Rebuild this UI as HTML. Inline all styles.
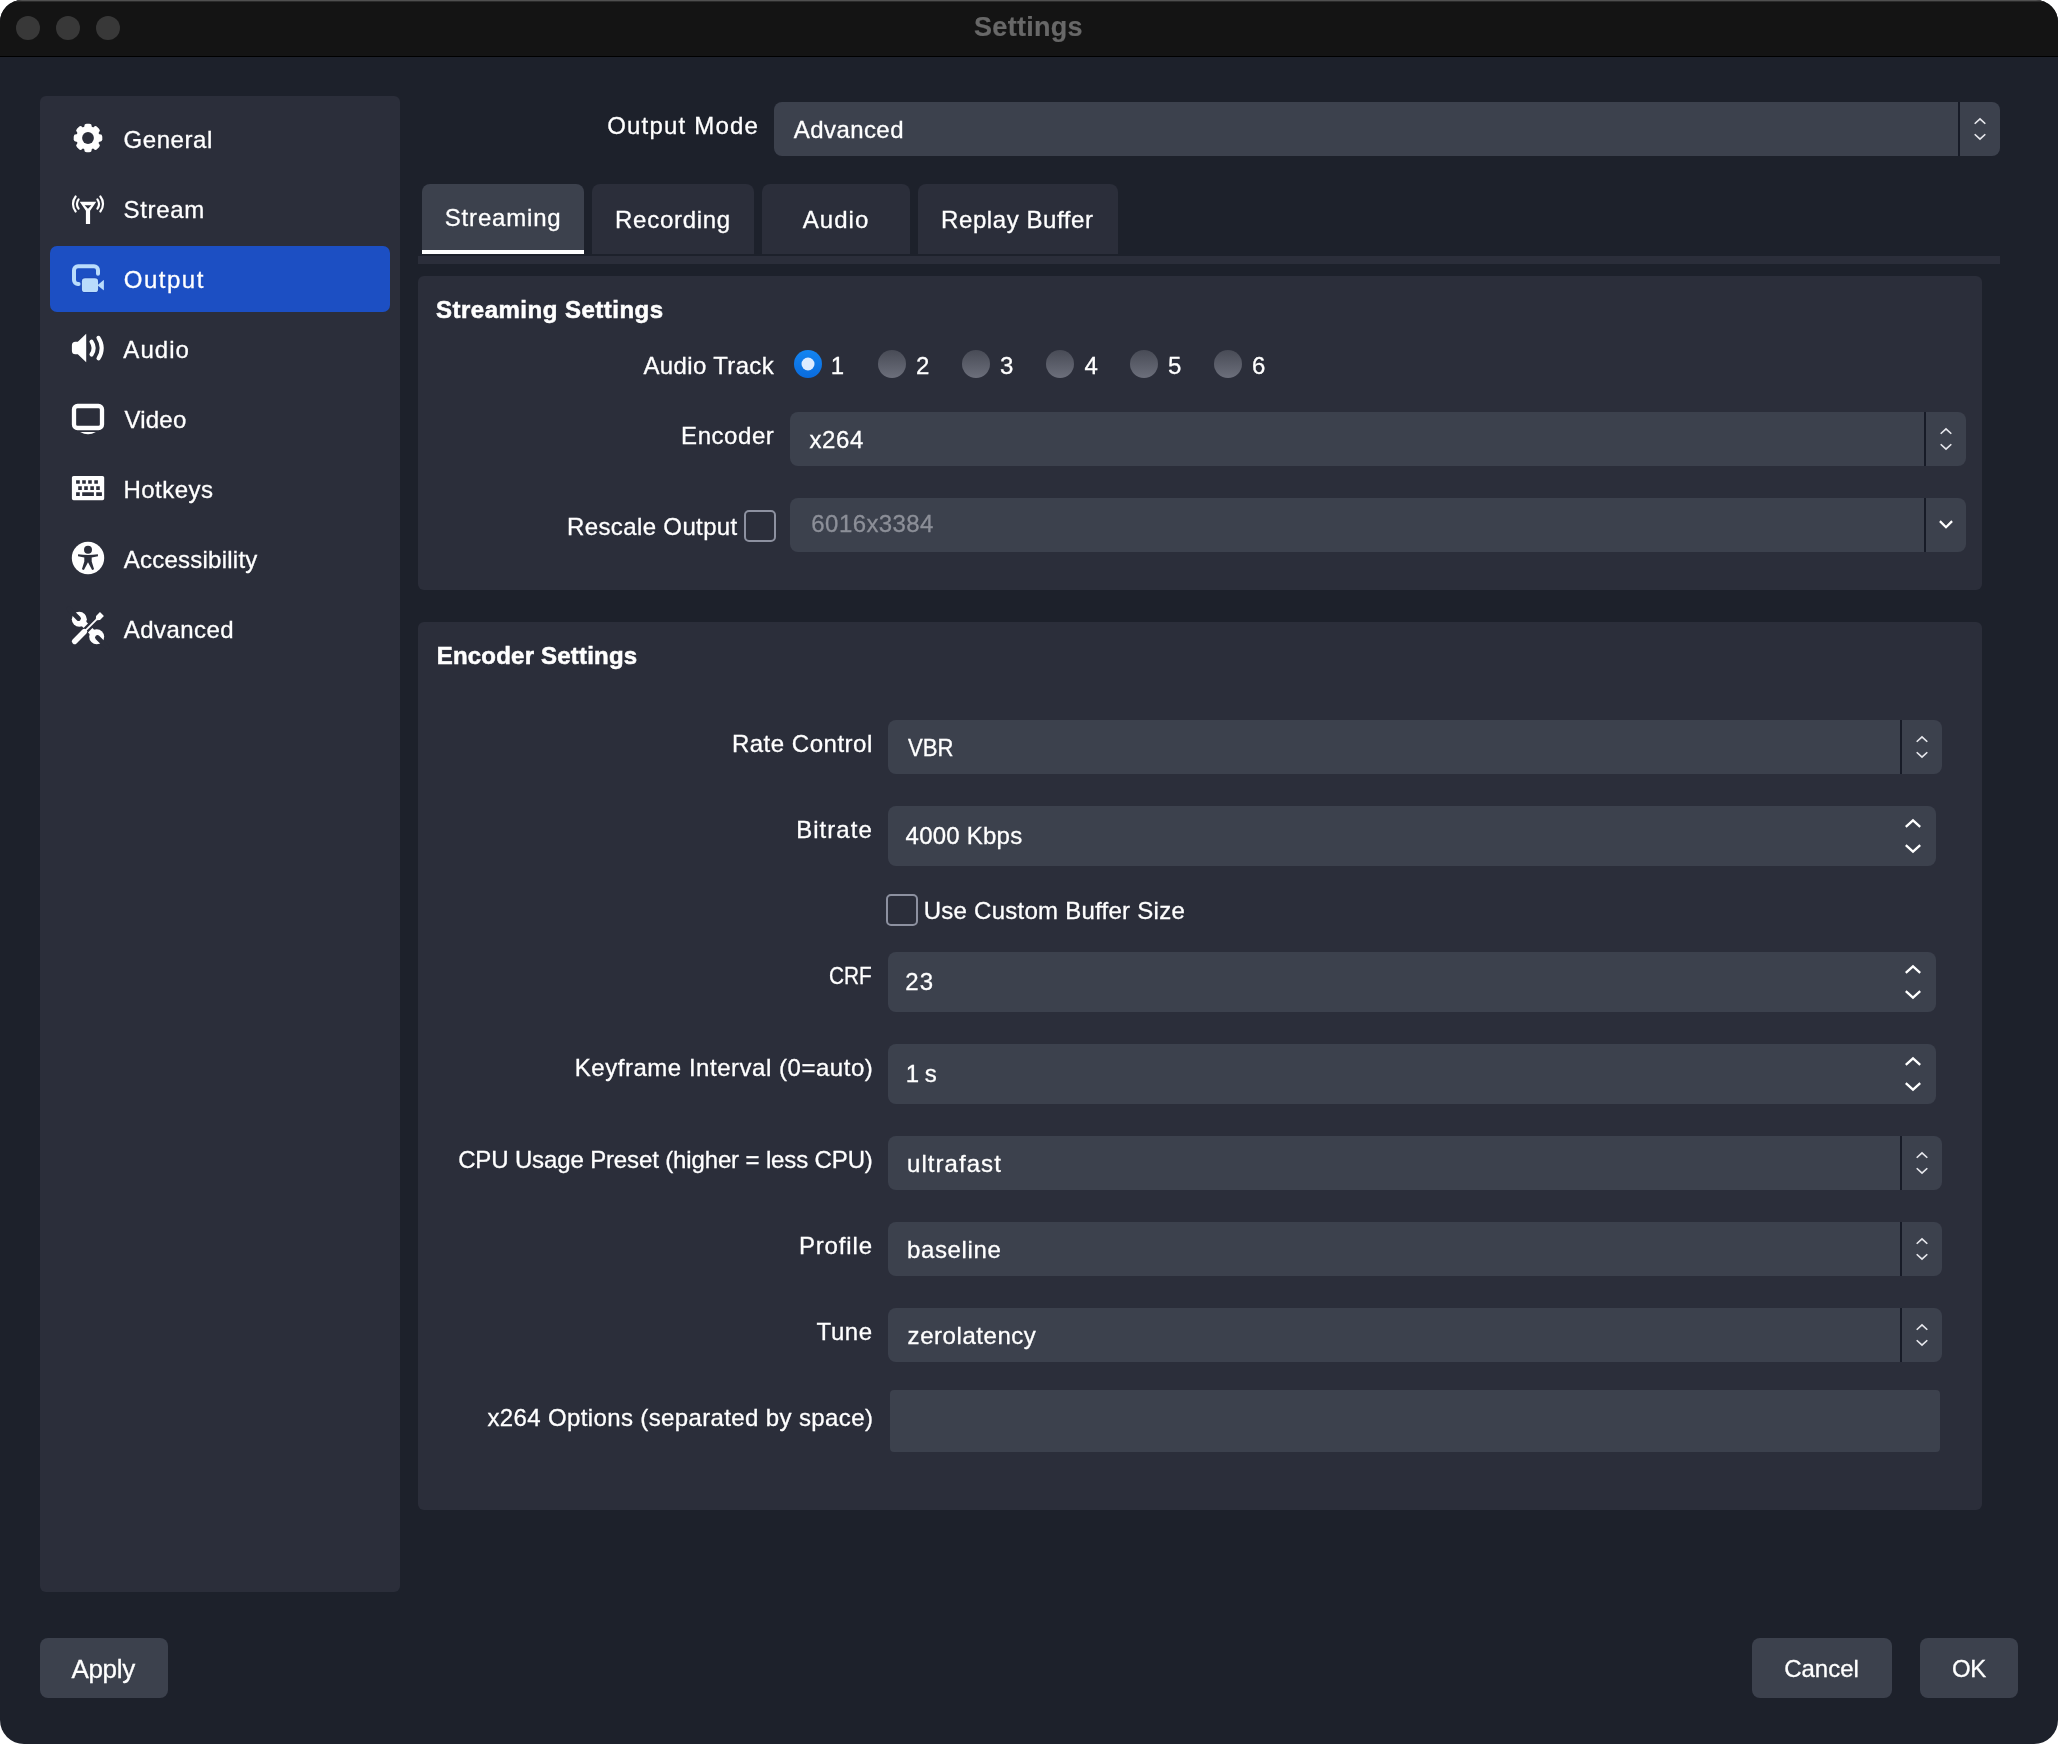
<!DOCTYPE html>
<html><head><meta charset="utf-8"><title>Settings</title>
<style>
html,body{margin:0;padding:0;background:#fff;}
body{width:2058px;height:1744px;overflow:hidden;position:relative;font-family:"Liberation Sans",sans-serif;}
#win{position:absolute;left:0;top:0;width:2058px;height:1744px;background:#1d212b;border-radius:22px 22px 24px 24px;overflow:hidden;}
#win>div{position:absolute;}
#tb{left:0;top:0;width:2058px;height:56px;background:#141414;border-bottom:1px solid #000;box-shadow:inset 0 1px 0 #505050, inset 0 2px 0 #2a2a2a;}
.t{position:absolute;white-space:nowrap;height:40px;line-height:40px;-webkit-text-stroke:0.3px currentColor;}
#txt{position:absolute;left:0;top:0;width:2058px;height:1744px;will-change:transform;}
svg{position:absolute;left:0;top:0;}
</style></head><body><div id="win">
<div id="tb"></div>

<div style="left:40px;top:96px;width:360px;height:1496px;background:#2b2e3a;border-radius:6px;"></div>
<div style="left:50px;top:246px;width:340px;height:66px;background:#1c4fc3;border-radius:7px;"></div>
<div style="left:774px;top:102px;width:1226px;height:54px;background:#3c414d;border-radius:8px;"></div>
<div style="left:1958px;top:102px;width:2px;height:54px;background:#171b27;border-radius:0px;"></div>
<div style="left:422px;top:184px;width:162px;height:70px;background:#3c414d;border-radius:8px 8px 0 0;"></div>
<div style="left:422px;top:250px;width:162px;height:4px;background:#ffffff;border-radius:0px;"></div>
<div style="left:592px;top:184px;width:162px;height:70px;background:#2b2e3a;border-radius:8px 8px 0 0;"></div>
<div style="left:762px;top:184px;width:148px;height:70px;background:#2b2e3a;border-radius:8px 8px 0 0;"></div>
<div style="left:918px;top:184px;width:200px;height:70px;background:#2b2e3a;border-radius:8px 8px 0 0;"></div>
<div style="left:418px;top:256px;width:1582px;height:8px;background:#2b2e3a;border-radius:0px;"></div>
<div style="left:418px;top:276px;width:1564px;height:314px;background:#2b2e3a;border-radius:6px;"></div>
<div style="left:418px;top:622px;width:1564px;height:888px;background:#2b2e3a;border-radius:6px;"></div>
<div style="left:790px;top:412px;width:1176px;height:54px;background:#3c414d;border-radius:8px;"></div>
<div style="left:1924px;top:412px;width:2px;height:54px;background:#171b27;border-radius:0px;"></div>
<div style="left:790px;top:498px;width:1176px;height:54px;background:#3c414d;border-radius:8px;"></div>
<div style="left:1924px;top:498px;width:2px;height:54px;background:#171b27;border-radius:0px;"></div>
<div style="left:888px;top:720px;width:1054px;height:54px;background:#3c414d;border-radius:8px;"></div>
<div style="left:1900px;top:720px;width:2px;height:54px;background:#171b27;border-radius:0px;"></div>
<div style="left:888px;top:806px;width:1048px;height:60px;background:#3c414d;border-radius:8px;"></div>
<div style="left:888px;top:952px;width:1048px;height:60px;background:#3c414d;border-radius:8px;"></div>
<div style="left:888px;top:1044px;width:1048px;height:60px;background:#3c414d;border-radius:8px;"></div>
<div style="left:888px;top:1136px;width:1054px;height:54px;background:#3c414d;border-radius:8px;"></div>
<div style="left:1900px;top:1136px;width:2px;height:54px;background:#171b27;border-radius:0px;"></div>
<div style="left:888px;top:1222px;width:1054px;height:54px;background:#3c414d;border-radius:8px;"></div>
<div style="left:1900px;top:1222px;width:2px;height:54px;background:#171b27;border-radius:0px;"></div>
<div style="left:888px;top:1308px;width:1054px;height:54px;background:#3c414d;border-radius:8px;"></div>
<div style="left:1900px;top:1308px;width:2px;height:54px;background:#171b27;border-radius:0px;"></div>
<div style="left:890px;top:1390px;width:1050px;height:62px;background:#3c414d;border-radius:4px;"></div>
<div style="left:40px;top:1638px;width:128px;height:60px;background:#3c414d;border-radius:8px;"></div>
<div style="left:1752px;top:1638px;width:140px;height:60px;background:#3c414d;border-radius:8px;"></div>
<div style="left:1920px;top:1638px;width:98px;height:60px;background:#3c414d;border-radius:8px;"></div>
<div style="left:744px;top:510px;width:32px;height:32px;box-sizing:border-box;border:2px solid #8d91a0;border-radius:5px;background:#2b2e3a"></div>
<div style="left:886px;top:894px;width:32px;height:32px;box-sizing:border-box;border:2px solid #8d91a0;border-radius:5px;background:#2b2e3a"></div>
<svg width="2058" height="1744" viewBox="0 0 2058 1744"><defs><linearGradient id="rb" x1="0" y1="0" x2="0" y2="1"><stop offset="0" stop-color="#1385f2"/><stop offset="1" stop-color="#0a6bdc"/></linearGradient><linearGradient id="rg" x1="0" y1="0" x2="0" y2="1"><stop offset="0" stop-color="#484b56"/><stop offset="1" stop-color="#6c6f7b"/></linearGradient></defs>
<circle cx="28" cy="28" r="12" fill="#383838"/><circle cx="68" cy="28" r="12" fill="#383838"/><circle cx="108" cy="28" r="12" fill="#383838"/>
<path d="M1974.7 123.75L1980 118.85L1985.3 123.75" fill="none" stroke="#e6e7ec" stroke-width="1.7" stroke-linecap="butt" stroke-linejoin="miter"/>
<path d="M1974.7 134.25L1980 139.15L1985.3 134.25" fill="none" stroke="#e6e7ec" stroke-width="1.7" stroke-linecap="butt" stroke-linejoin="miter"/>
<path d="M1940.7 433.75L1946 428.85L1951.3 433.75" fill="none" stroke="#e6e7ec" stroke-width="1.7" stroke-linecap="butt" stroke-linejoin="miter"/>
<path d="M1940.7 444.25L1946 449.15L1951.3 444.25" fill="none" stroke="#e6e7ec" stroke-width="1.7" stroke-linecap="butt" stroke-linejoin="miter"/>
<path d="M1916.7 741.75L1922 736.85L1927.3 741.75" fill="none" stroke="#e6e7ec" stroke-width="1.7" stroke-linecap="butt" stroke-linejoin="miter"/>
<path d="M1916.7 752.25L1922 757.15L1927.3 752.25" fill="none" stroke="#e6e7ec" stroke-width="1.7" stroke-linecap="butt" stroke-linejoin="miter"/>
<path d="M1916.7 1157.75L1922 1152.85L1927.3 1157.75" fill="none" stroke="#e6e7ec" stroke-width="1.7" stroke-linecap="butt" stroke-linejoin="miter"/>
<path d="M1916.7 1168.25L1922 1173.15L1927.3 1168.25" fill="none" stroke="#e6e7ec" stroke-width="1.7" stroke-linecap="butt" stroke-linejoin="miter"/>
<path d="M1916.7 1243.75L1922 1238.85L1927.3 1243.75" fill="none" stroke="#e6e7ec" stroke-width="1.7" stroke-linecap="butt" stroke-linejoin="miter"/>
<path d="M1916.7 1254.25L1922 1259.15L1927.3 1254.25" fill="none" stroke="#e6e7ec" stroke-width="1.7" stroke-linecap="butt" stroke-linejoin="miter"/>
<path d="M1916.7 1329.75L1922 1324.85L1927.3 1329.75" fill="none" stroke="#e6e7ec" stroke-width="1.7" stroke-linecap="butt" stroke-linejoin="miter"/>
<path d="M1916.7 1340.25L1922 1345.15L1927.3 1340.25" fill="none" stroke="#e6e7ec" stroke-width="1.7" stroke-linecap="butt" stroke-linejoin="miter"/>
<path d="M1939.9 521.15L1946 527.25L1952.1 521.15" fill="none" stroke="#ffffff" stroke-width="2.2" stroke-linecap="butt" stroke-linejoin="miter"/>
<path d="M1905.8 826.9L1913 820.3L1920.2 826.9" fill="none" stroke="#ffffff" stroke-width="2.3" stroke-linecap="butt" stroke-linejoin="miter"/>
<path d="M1905.8 845.1L1913 851.7L1920.2 845.1" fill="none" stroke="#ffffff" stroke-width="2.3" stroke-linecap="butt" stroke-linejoin="miter"/>
<path d="M1905.8 972.9L1913 966.3L1920.2 972.9" fill="none" stroke="#ffffff" stroke-width="2.3" stroke-linecap="butt" stroke-linejoin="miter"/>
<path d="M1905.8 991.1L1913 997.7L1920.2 991.1" fill="none" stroke="#ffffff" stroke-width="2.3" stroke-linecap="butt" stroke-linejoin="miter"/>
<path d="M1905.8 1064.9L1913 1058.3L1920.2 1064.9" fill="none" stroke="#ffffff" stroke-width="2.3" stroke-linecap="butt" stroke-linejoin="miter"/>
<path d="M1905.8 1083.1L1913 1089.7L1920.2 1083.1" fill="none" stroke="#ffffff" stroke-width="2.3" stroke-linecap="butt" stroke-linejoin="miter"/>
<circle cx="808" cy="364" r="14" fill="url(#rb)"/><circle cx="808" cy="364" r="6.5" fill="#dcebff"/>
<circle cx="892" cy="364" r="14" fill="url(#rg)"/>
<circle cx="976" cy="364" r="14" fill="url(#rg)"/>
<circle cx="1060" cy="364" r="14" fill="url(#rg)"/>
<circle cx="1144" cy="364" r="14" fill="url(#rg)"/>
<circle cx="1228" cy="364" r="14" fill="url(#rg)"/>
<g transform="translate(88,138)" fill="#fefefe">
<circle r="11.7"/>
<rect x="-3.7" y="-14.3" width="7.4" height="8" rx="2.4" transform="rotate(0)"/>
<rect x="-3.7" y="-14.3" width="7.4" height="8" rx="2.4" transform="rotate(45)"/>
<rect x="-3.7" y="-14.3" width="7.4" height="8" rx="2.4" transform="rotate(90)"/>
<rect x="-3.7" y="-14.3" width="7.4" height="8" rx="2.4" transform="rotate(135)"/>
<rect x="-3.7" y="-14.3" width="7.4" height="8" rx="2.4" transform="rotate(180)"/>
<rect x="-3.7" y="-14.3" width="7.4" height="8" rx="2.4" transform="rotate(225)"/>
<rect x="-3.7" y="-14.3" width="7.4" height="8" rx="2.4" transform="rotate(270)"/>
<rect x="-3.7" y="-14.3" width="7.4" height="8" rx="2.4" transform="rotate(315)"/>
<circle r="5.9" fill="#2b2e3a"/></g>
<path fill-rule="evenodd" fill="#fefefe" d="M79.7 201.8L96.3 201.8L90.1 210.8L90.1 224.1L85.9 224.1L85.9 210.8ZM84.6 205.2L91.4 205.2L88 208.8Z"/>
<path d="M78.59 208.58A7.8 7.8 0 0 1 78.59 199.42" fill="none" stroke="#fefefe" stroke-width="2.2" stroke-linecap="round"/>
<path d="M97.41 199.42A7.8 7.8 0 0 1 97.41 208.58" fill="none" stroke="#fefefe" stroke-width="2.2" stroke-linecap="round"/>
<path d="M75.65 211.49A11.9 11.9 0 0 1 75.65 196.51" fill="none" stroke="#fefefe" stroke-width="2.2" stroke-linecap="round"/>
<path d="M100.35 196.51A11.9 11.9 0 0 1 100.35 211.49" fill="none" stroke="#fefefe" stroke-width="2.2" stroke-linecap="round"/>
<path d="M98 273.7L98 270.2A4 4 0 0 0 94 266.2L78 266.2A4 4 0 0 0 74 270.2L74 280A4 4 0 0 0 78 284L78.6 284" fill="none" stroke="#b9dcfb" stroke-width="4" stroke-linecap="round"/>
<rect x="81.9" y="278.2" width="16.2" height="13.9" rx="3.2" fill="#b9dcfb" stroke="#1a45b0" stroke-width="1.2" paint-order="stroke"/>
<path d="M98 284.7L103.3 280.2Q103.9 279.8 103.9 280.6L103.9 289.7Q103.9 290.5 103.3 290.1L98 285.7Z" fill="#b9dcfb"/>
<path d="M86.2 333.8L86.2 362.3L77.8 354.2L75.4 354.2Q71.9 354.2 71.9 350.7L71.9 345.3Q71.9 341.8 75.4 341.8L77.8 341.8Z" fill="#fefefe"/>
<path d="M91.5 341.6A11.6 11.6 0 0 1 91.5 354.5" fill="none" stroke="#fefefe" stroke-width="4.1" stroke-linecap="round"/>
<path d="M98.5 337.8A18.2 18.2 0 0 1 98.5 358.4" fill="none" stroke="#fefefe" stroke-width="4.1" stroke-linecap="round"/>
<rect x="74" y="406" width="28" height="22" rx="3.5" fill="none" stroke="#fefefe" stroke-width="4.3"/>
<path d="M80.1 431.9L95.9 431.9Q88 436.6 80.1 431.9Z" fill="#fefefe"/>
<path fill-rule="evenodd" fill="#fefefe" d="M73.6 475.9H102.5Q104.2 475.9 104.2 477.6V498.5Q104.2 500.2 102.5 500.2H73.6Q71.9 500.2 71.9 498.5V477.6Q71.9 475.9 73.6 475.9ZM76.1 480.3H79.8V483.8H76.1ZM82.2 480.3H85.8V483.8H82.2ZM88.2 480.3H91.8V483.8H88.2ZM94.3 480.3H97.9V483.8H94.3ZM78.2 486.3H81.8V489.9H78.2ZM84.2 486.3H87.8V489.9H84.2ZM90.3 486.3H93.9V489.9H90.3ZM96.2 486.3H99.8V489.9H96.2ZM76.1 492.2H79.8V495.9H76.1ZM82.2 492.2H93.9V495.9H82.2ZM96.2 492.2H101.9V495.9H96.2Z"/>
<circle cx="88" cy="558" r="16.2" fill="#fefefe"/>
<circle cx="88" cy="549.8" r="4" fill="#2b2e3a"/>
<path d="M78.1 554.2Q88 555.6 97.9 554.2L98 556.3L91.7 557.5L91.7 561.4L94.1 569.3L92.1 570.1L88 562.3L83.9 570.1L81.9 569.3L84.3 561.4L84.3 557.5L78 556.3Z" fill="#2b2e3a"/>
<g transform="translate(88,628) rotate(225)"><rect x="3.1" y="-3.1" width="7" height="6.2" fill="#fefefe"/><circle cx="12.3" cy="0" r="7.5" fill="#fefefe"/><path d="M13.4 0L27 0" stroke="#2b2e3a" stroke-width="4.8" stroke-linecap="round" fill="none"/></g>
<g transform="translate(88,628) rotate(45)"><rect x="3.1" y="-3.1" width="7" height="6.2" fill="#fefefe"/><circle cx="12.3" cy="0" r="7.5" fill="#fefefe"/><path d="M13.4 0L27 0" stroke="#2b2e3a" stroke-width="4.8" stroke-linecap="round" fill="none"/></g>
<g transform="translate(88,628) rotate(-45)" fill="#fefefe"><rect x="-21.6" y="-2.8" width="19.2" height="5.6" rx="2.6"/><rect x="-4" y="-0.9" width="18" height="1.8"/><path d="M12 -0.9L14.2 -2.8L19.7 -2.8L19.7 2.8L14.2 2.8L12 0.9Z"/></g>
</svg>
<div id="txt">
<div class="t" id="s0" style="font-size:24px;color:#ffffff;top:120px;letter-spacing:0.544px;left:123.58px;">General</div>
<div class="t" id="s1" style="font-size:24px;color:#ffffff;top:190px;letter-spacing:0.701px;left:123.48px;">Stream</div>
<div class="t" id="s2" style="font-size:24px;color:#ffffff;top:260px;letter-spacing:1.495px;left:123.82px;">Output</div>
<div class="t" id="s3" style="font-size:24px;color:#ffffff;top:330px;letter-spacing:1.053px;left:123.37px;">Audio</div>
<div class="t" id="s4" style="font-size:24px;color:#ffffff;top:400px;letter-spacing:0.238px;left:124.41px;">Video</div>
<div class="t" id="s5" style="font-size:24px;color:#ffffff;top:470px;letter-spacing:0.468px;left:123.41px;">Hotkeys</div>
<div class="t" id="s6" style="font-size:24px;color:#ffffff;top:540px;letter-spacing:0.238px;left:123.78px;">Accessibility</div>
<div class="t" id="s7" style="font-size:24px;color:#ffffff;top:610px;letter-spacing:0.452px;left:123.78px;">Advanced</div>
<div class="t" id="om" style="font-size:24px;color:#ffffff;top:106px;letter-spacing:1.193px;left:607.13px;">Output Mode</div>
<div class="t" id="omv" style="font-size:24px;color:#ffffff;top:110px;letter-spacing:0.422px;left:793.79px;">Advanced</div>
<div class="t" id="t0" style="font-size:24px;color:#ffffff;top:198px;letter-spacing:0.816px;left:444.77px;">Streaming</div>
<div class="t" id="t1" style="font-size:24px;color:#ffffff;top:200px;letter-spacing:0.711px;left:615.08px;">Recording</div>
<div class="t" id="t2" style="font-size:24px;color:#ffffff;top:200px;letter-spacing:1.011px;left:802.84px;">Audio</div>
<div class="t" id="t3" style="font-size:24px;color:#ffffff;top:200px;letter-spacing:0.57px;left:941.08px;">Replay Buffer</div>
<div class="t" id="g1" style="font-size:24px;color:#ffffff;top:290px;font-weight:bold;-webkit-text-stroke:0.55px currentColor;letter-spacing:0.485px;left:436.09px;">Streaming Settings</div>
<div class="t" id="at" style="font-size:24px;color:#ffffff;top:346px;letter-spacing:0.348px;left:643.5px;">Audio Track</div>
<div class="t" id="r0" style="font-size:24px;color:#ffffff;top:346px;left:830.72px;">1</div>
<div class="t" id="r1" style="font-size:24px;color:#ffffff;top:346px;left:916.09px;">2</div>
<div class="t" id="r2" style="font-size:24px;color:#ffffff;top:346px;left:999.96px;">3</div>
<div class="t" id="r3" style="font-size:24px;color:#ffffff;top:346px;left:1084.39px;">4</div>
<div class="t" id="r4" style="font-size:24px;color:#ffffff;top:346px;left:1168.06px;">5</div>
<div class="t" id="r5" style="font-size:24px;color:#ffffff;top:346px;left:1251.88px;">6</div>
<div class="t" id="enc" style="font-size:24px;color:#ffffff;top:416px;letter-spacing:0.551px;left:681.08px;">Encoder</div>
<div class="t" id="encv" style="font-size:24px;color:#ffffff;top:420px;letter-spacing:0.662px;left:809.38px;">x264</div>
<div class="t" id="ro" style="font-size:24px;color:#ffffff;top:507px;letter-spacing:0.365px;left:567.08px;">Rescale Output</div>
<div class="t" id="rov" style="font-size:24px;color:#8c8f98;top:504px;letter-spacing:0.414px;left:811.36px;">6016x3384</div>
<div class="t" id="g2" style="font-size:24px;color:#ffffff;top:636px;font-weight:bold;-webkit-text-stroke:0.55px currentColor;letter-spacing:0.2px;left:436.76px;">Encoder Settings</div>
<div class="t" id="rc" style="font-size:24px;color:#ffffff;top:724px;letter-spacing:0.513px;left:731.91px;">Rate Control</div>
<div class="t" id="rcv" style="font-size:24px;color:#ffffff;top:728px;left:907.74px;transform:scaleX(0.9212);transform-origin:0 50%;">VBR</div>
<div class="t" id="br" style="font-size:24px;color:#ffffff;top:810px;letter-spacing:1.054px;left:796.15px;">Bitrate</div>
<div class="t" id="brv" style="font-size:24px;color:#ffffff;top:816px;letter-spacing:0.224px;left:905.62px;">4000 Kbps</div>
<div class="t" id="cb" style="font-size:24px;color:#ffffff;top:891px;letter-spacing:0.259px;left:923.67px;">Use Custom Buffer Size</div>
<div class="t" id="crf" style="font-size:24px;color:#ffffff;top:956px;left:829.28px;transform:scaleX(0.8676);transform-origin:0 50%;">CRF</div>
<div class="t" id="crfv" style="font-size:24px;color:#ffffff;top:962px;letter-spacing:1.105px;left:905.23px;">23</div>
<div class="t" id="ki" style="font-size:24px;color:#ffffff;top:1048px;letter-spacing:0.529px;left:574.78px;">Keyframe Interval (0=auto)</div>
<div class="t" id="kiv" style="font-size:24px;color:#ffffff;top:1054px;letter-spacing:-0.419px;left:905.66px;">1 s</div>
<div class="t" id="cpu" style="font-size:24px;color:#ffffff;top:1140px;letter-spacing:-0.137px;left:458.14px;">CPU Usage Preset (higher = less CPU)</div>
<div class="t" id="cpuv" style="font-size:24px;color:#ffffff;top:1144px;letter-spacing:1.052px;left:907.03px;">ultrafast</div>
<div class="t" id="pr" style="font-size:24px;color:#ffffff;top:1226px;letter-spacing:0.85px;left:798.93px;">Profile</div>
<div class="t" id="prv" style="font-size:24px;color:#ffffff;top:1230px;letter-spacing:0.628px;left:907.03px;">baseline</div>
<div class="t" id="tu" style="font-size:24px;color:#ffffff;top:1312px;letter-spacing:0.542px;left:816.6px;">Tune</div>
<div class="t" id="tuv" style="font-size:24px;color:#ffffff;top:1316px;letter-spacing:0.556px;left:907.59px;">zerolatency</div>
<div class="t" id="xo" style="font-size:24px;color:#ffffff;top:1398px;letter-spacing:0.373px;left:487.4px;">x264 Options (separated by space)</div>
<div class="t" id="ap" style="font-size:26px;color:#ffffff;top:1649px;letter-spacing:-0.328px;left:71.48px;">Apply</div>
<div class="t" id="ca" style="font-size:24px;color:#ffffff;top:1649px;letter-spacing:-0.006px;left:1784.14px;">Cancel</div>
<div class="t" id="ok" style="font-size:24px;color:#ffffff;top:1649px;letter-spacing:-0.341px;left:1951.83px;transform:scaleX(0.9977);transform-origin:0 50%;">OK</div>
<div class="t" id="title" style="font-size:27px;color:#686868;top:7px;font-weight:bold;-webkit-text-stroke:0.2px currentColor;letter-spacing:0.27px;left:974.07px;">Settings</div>
</div>
</div></body></html>
